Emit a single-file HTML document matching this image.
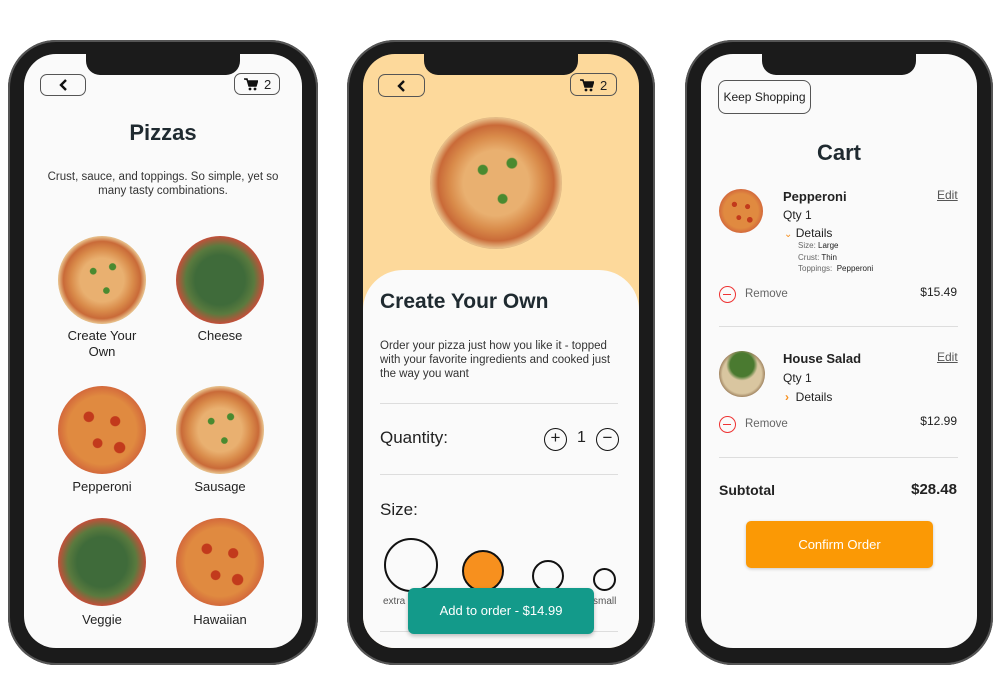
<!DOCTYPE html>
<html><head><meta charset="utf-8"><style>
*{margin:0;padding:0;box-sizing:border-box}
body{width:1000px;height:700px;background:#fff;position:relative;overflow:hidden;font-family:"Liberation Sans",sans-serif;color:#222}
.a{position:absolute}
.phone{position:absolute;top:40px;width:310px;height:625px;background:#1b1b1b;border-radius:48px;box-shadow:0 0 0 2px #555 inset}
.scr{position:absolute;top:14px;left:16px;right:16px;bottom:17px;background:#fafafa;border-radius:32px;overflow:hidden}
.notch{position:absolute;top:0;left:50%;margin-left:-77px;width:154px;height:21px;background:#1b1b1b;border-radius:0 0 14px 14px}
.btn{position:absolute;border:1px solid #555;border-radius:7px;font-size:13px;text-align:center}
.t{position:absolute;white-space:nowrap}
.pz{position:absolute;border-radius:50%}
.wood{background:radial-gradient(circle at 40% 40%,#4a8a30 0 4%,transparent 5%),radial-gradient(circle at 62% 35%,#4a8a30 0 4%,transparent 5%),radial-gradient(circle at 55% 62%,#4a8a30 0 4%,transparent 5%),radial-gradient(circle,#e9b070 0 35%,#d98b4a 50%,#c96a38 62%,#e8c08a 70%,#a8682e 74%,#c4874a 90%,#8a5220 100%)}
.pep{background:radial-gradient(circle at 35% 35%,#c23a1c 0 6%,transparent 7%),radial-gradient(circle at 65% 40%,#c23a1c 0 6%,transparent 7%),radial-gradient(circle at 45% 65%,#c23a1c 0 6%,transparent 7%),radial-gradient(circle at 70% 70%,#c23a1c 0 6%,transparent 7%),radial-gradient(circle,#e08a40 0 55%,#d0603a 75%,#e7b679 85%,#c98c50 100%)}
.veg{background:radial-gradient(circle,#3f6b3a 0 40%,#5a7a3e 55%,#c0503a 70%,#e8c9a0 82%,#cfa878 100%)}
.cir{position:absolute;border:2px solid #111;border-radius:50%}
.line{position:absolute;height:1px;background:#ddd}
.btn svg{position:absolute}
</style></head><body>

<!-- phone 1 -->
<div class="phone" style="left:8px">
<div class="scr">
<div class="notch"></div>
<div class="btn" style="left:16px;top:20px;width:46px;height:22px"><svg width="10" height="12" viewBox="0 0 10 12" style="left:18px;top:4px"><path d="M7 1L2 6l5 5" fill="none" stroke="#111" stroke-width="2.4"/></svg></div>
<div class="btn" style="left:210px;top:19px;width:46px;height:22px"><svg width="14" height="13" viewBox="0 0 14 13" style="left:9px;top:4px"><path d="M0 1h3l2 7h7l1.5-5H4" fill="#111" stroke="#111" stroke-width="1.5"/><circle cx="6" cy="11" r="1.4" fill="#111"/><circle cx="11" cy="11" r="1.4" fill="#111"/></svg><span class="t" style="left:29px;top:3px">2</span></div>
<div class="t" style="left:0;right:0;text-align:center;top:66px;font-size:22px;font-weight:bold;color:#1f2a30">Pizzas</div>
<div class="t" style="left:0;right:0;text-align:center;top:116px;font-size:11.5px;line-height:14px;white-space:normal;color:#333">Crust, sauce, and toppings. So simple, yet so<br>many tasty combinations.</div>
<div class="pz wood" style="left:34px;top:182px;width:88px;height:88px"></div>
<div class="pz veg" style="left:152px;top:182px;width:88px;height:88px"></div>
<div class="t" style="left:28px;width:100px;text-align:center;top:274px;font-size:13px;line-height:16px;white-space:normal">Create Your<br>Own</div>
<div class="t" style="left:146px;width:100px;text-align:center;top:274px;font-size:13px">Cheese</div>
<div class="pz pep" style="left:34px;top:332px;width:88px;height:88px"></div>
<div class="pz wood" style="left:152px;top:332px;width:88px;height:88px"></div>
<div class="t" style="left:28px;width:100px;text-align:center;top:425px;font-size:13px">Pepperoni</div>
<div class="t" style="left:146px;width:100px;text-align:center;top:425px;font-size:13px">Sausage</div>
<div class="pz veg" style="left:34px;top:464px;width:88px;height:88px"></div>
<div class="pz pep" style="left:152px;top:464px;width:88px;height:88px"></div>
<div class="t" style="left:28px;width:100px;text-align:center;top:558px;font-size:13px">Veggie</div>
<div class="t" style="left:146px;width:100px;text-align:center;top:558px;font-size:13px">Hawaiian</div>
</div></div>

<!-- phone 2 -->
<div class="phone" style="left:347px;width:308px">
<div class="scr" style="background:#fdd99b">
<div class="notch"></div>
<div class="btn" style="left:15px;top:20px;width:47px;height:23px"><svg width="10" height="12" viewBox="0 0 10 12" style="left:18px;top:5px"><path d="M7 1L2 6l5 5" fill="none" stroke="#111" stroke-width="2.4"/></svg></div>
<div class="btn" style="left:207px;top:19px;width:47px;height:23px"><svg width="14" height="13" viewBox="0 0 14 13" style="left:9px;top:5px"><path d="M0 1h3l2 7h7l1.5-5H4" fill="#111" stroke="#111" stroke-width="1.5"/><circle cx="6" cy="11" r="1.4" fill="#111"/><circle cx="11" cy="11" r="1.4" fill="#111"/></svg><span class="t" style="left:29px;top:4px">2</span></div>
<div class="pz wood" style="left:67px;top:63px;width:132px;height:132px"></div>
<div class="a" style="left:0;right:0;top:216px;bottom:0;background:#fafafa;border-radius:40px 40px 0 0"></div>
<div class="t" style="left:17px;top:236px;font-size:21px;font-weight:bold;color:#1f2a30">Create Your Own</div>
<div class="t" style="left:17px;top:285px;font-size:11.5px;line-height:14px;color:#333">Order your pizza just how you like it - topped<br>with your favorite ingredients and cooked just<br>the way you want</div>
<div class="line" style="left:17px;width:238px;top:349px"></div>
<div class="t" style="left:17px;top:374px;font-size:17px;color:#222">Quantity:</div>
<div class="cir" style="left:181px;top:374px;width:23px;height:23px;font-size:17px;line-height:18px;text-align:center;border-width:1.5px">+</div>
<div class="t" style="left:214px;top:375px;font-size:16px">1</div>
<div class="cir" style="left:233px;top:374px;width:23px;height:23px;font-size:17px;line-height:17px;text-align:center;border-width:1.5px">&#8722;</div>
<div class="line" style="left:17px;width:238px;top:420px"></div>
<div class="t" style="left:17px;top:446px;font-size:17px">Size:</div>
<div class="cir" style="left:21px;top:484px;width:54px;height:54px"></div>
<div class="cir" style="left:99px;top:496px;width:42px;height:42px;background:#f7901e"></div>
<div class="cir" style="left:169px;top:506px;width:32px;height:32px"></div>
<div class="cir" style="left:230px;top:514px;width:23px;height:23px"></div>
<div class="t" style="left:20px;top:542px;font-size:10px;color:#555">extra</div>
<div class="t" style="left:230px;top:542px;font-size:10px;color:#555">small</div>
<div class="line" style="left:17px;width:238px;top:577px"></div>
<div class="a" style="left:45px;top:534px;width:186px;height:46px;background:#139a8a;border-radius:6px;color:#fff;font-size:13px;text-align:center;line-height:46px;box-shadow:0 2px 4px rgba(0,0,0,.25)">Add to order - $14.99</div>
</div></div>

<!-- phone 3 -->
<div class="phone" style="left:685px;width:308px">
<div class="scr">
<div class="notch"></div>
<div class="btn" style="left:17px;top:26px;width:93px;height:34px;line-height:32px;font-size:12px;border-radius:8px">Keep Shopping</div>
<div class="t" style="left:0;right:0;text-align:center;top:86px;font-size:22px;font-weight:bold;color:#1f2a30">Cart</div>
<div class="pz pep" style="left:18px;top:135px;width:44px;height:44px"></div>
<div class="t" style="left:82px;top:135px;font-size:13px;font-weight:bold">Pepperoni</div>
<div class="t" style="left:236px;top:134px;font-size:12px;color:#555;text-decoration:underline">Edit</div>
<div class="t" style="left:82px;top:154px;font-size:12px">Qty 1</div>
<div class="t" style="left:83px;top:172px;font-size:12px"><span style="color:#f7901e;font-size:10px">&#8964;</span> Details</div>
<div class="t" style="left:97px;top:186px;font-size:8px;line-height:11.5px;color:#666">Size: <span style="color:#222">Large</span><br>Crust: <span style="color:#222">Thin</span><br>Toppings: &nbsp;<span style="color:#222">Pepperoni</span></div>
<div class="a" style="left:18px;top:232px;width:17px;height:17px;border:1.5px solid #e33;border-radius:50%"><div class="a" style="left:3px;top:6.5px;width:8px;height:1.5px;background:#e33"></div></div>
<div class="t" style="left:44px;top:234px;font-size:11.5px;color:#666">Remove</div>
<div class="t" style="right:20px;top:231px;font-size:12px">$15.49</div>
<div class="line" style="left:18px;width:239px;top:272px"></div>
<div class="pz" style="left:18px;top:297px;width:46px;height:46px;background:radial-gradient(circle at 50% 30%,#4a7a30 0 30%,transparent 40%),radial-gradient(circle,#d9c6a0 0 60%,#8a6a48 75%,#b8a080 100%)"></div>
<div class="t" style="left:82px;top:297px;font-size:13px;font-weight:bold">House Salad</div>
<div class="t" style="left:236px;top:296px;font-size:12px;color:#555;text-decoration:underline">Edit</div>
<div class="t" style="left:82px;top:317px;font-size:12px">Qty 1</div>
<div class="t" style="left:84px;top:336px;font-size:12px"><span style="color:#f7901e;font-weight:bold">&#8250;</span>&nbsp; Details</div>
<div class="a" style="left:18px;top:362px;width:17px;height:17px;border:1.5px solid #e33;border-radius:50%"><div class="a" style="left:3px;top:6.5px;width:8px;height:1.5px;background:#e33"></div></div>
<div class="t" style="left:44px;top:364px;font-size:11.5px;color:#666">Remove</div>
<div class="t" style="right:20px;top:360px;font-size:12px">$12.99</div>
<div class="line" style="left:18px;width:239px;top:403px"></div>
<div class="t" style="left:18px;top:428px;font-size:14px;font-weight:bold">Subtotal</div>
<div class="t" style="right:20px;top:427px;font-size:15px;font-weight:bold">$28.48</div>
<div class="a" style="left:45px;top:467px;width:187px;height:47px;background:#fb9905;border-radius:5px;color:#fff;font-size:13px;text-align:center;line-height:47px;box-shadow:0 1px 3px rgba(0,0,0,.2)">Confirm Order</div>
</div></div>

</body></html>
